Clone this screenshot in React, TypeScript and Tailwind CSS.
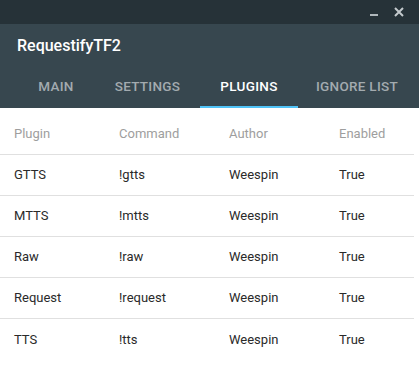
import React from "react";

const rows = [
  ["GTTS", "!gtts", "Weespin", "True"],
  ["MTTS", "!mtts", "Weespin", "True"],
  ["Raw", "!raw", "Weespin", "True"],
  ["Request", "!request", "Weespin", "True"],
  ["TTS", "!tts", "Weespin", "True"],
];

const tabs: [string, string][] = [
  ["MAIN", "w-[78px]"],
  ["SETTINGS", "w-[105px]"],
  ["PLUGINS", "w-[98px]"],
  ["IGNORE LIST", "w-[118px]"],
];

export default function App() {
  return (
    <div
      className="w-[419px] h-[368px] bg-white overflow-hidden"
      style={{ fontFamily: "Roboto, 'Liberation Sans', sans-serif" }}
    >
      <div className="h-[24px] bg-[#263238] flex items-center justify-end">
        <div className="w-[8px] h-[2px] bg-[#b0b8bc] mt-[5px] mr-[16px]" />
        <svg width="10" height="10" viewBox="0 0 10 10" className="mr-[15px]">
          <path d="M1 1 L9 9 M9 1 L1 9" stroke="#c4cacd" strokeWidth="2" />
        </svg>
      </div>
      <div className="bg-[#37474f] h-[84px] flex flex-col">
        <div className="h-[52px] pl-[17px] pt-[10px] text-white text-[16px] leading-[24px] font-medium">
          RequestifyTF2
        </div>
        <div className="flex flex-1 pl-[17px]">
          {tabs.map(([t, w]) => (
            <div
              key={t}
              className={
                w +
                " shrink-0 whitespace-nowrap flex items-start justify-center pt-[2px] leading-[16px] text-[13.5px] font-medium tracking-[0.3px] border-b-[2px] " +
                (t === "PLUGINS"
                  ? "text-white border-[#4fc3f7]"
                  : "text-[#a3abaf] border-transparent")
              }
            >
              {t}
            </div>
          ))}
        </div>
      </div>
      <div className="w-[414px] text-[13px]">
        <div className="h-[47px] pt-[5px] flex items-center border-b border-[#e0e0e0] text-[#9e9e9e]">
          <div className="w-[119px] pl-[14px]">Plugin</div>
          <div className="w-[110px]">Command</div>
          <div className="w-[110px]">Author</div>
          <div className="flex-1">Enabled</div>
        </div>
        {rows.map((r, i) => (
          <div
            key={r[0]}
            className={
              "h-[41px] flex items-center text-[#2a2a2a] " +
              (i < rows.length - 1 ? "border-b border-[#e0e0e0]" : "")
            }
          >
            <div className="w-[119px] pl-[14px]">{r[0]}</div>
            <div className="w-[110px]">{r[1]}</div>
            <div className="w-[110px]">{r[2]}</div>
            <div className="flex-1">{r[3]}</div>
          </div>
        ))}
      </div>
    </div>
  );
}
